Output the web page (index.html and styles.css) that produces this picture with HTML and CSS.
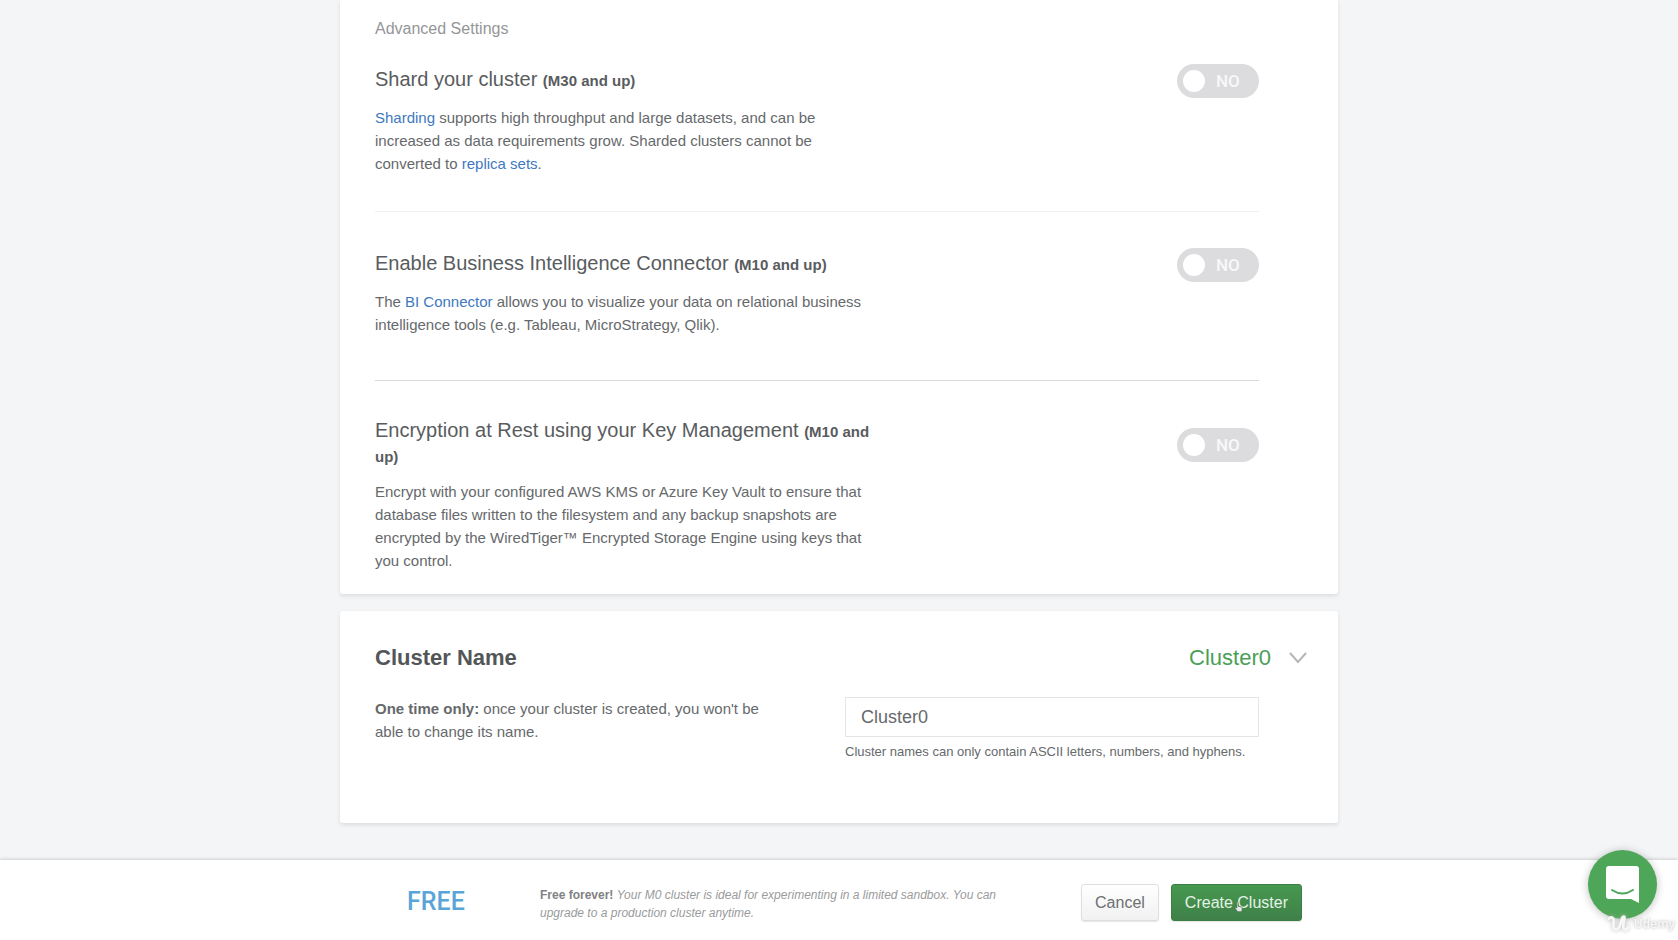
FILE: index.html
```html
<!DOCTYPE html>
<html lang="en">
<head>
<meta charset="utf-8">
<title>Create New Cluster</title>
<link rel="stylesheet" href="styles.css">
</head>
<body>
<main class="content">
  <section class="card settings">
    <h2 class="eyebrow">Advanced Settings</h2>
    <div class="option">
      <div class="option-head">
        <h3 class="option-title" id="shard">Shard your cluster <small>(M30 and up)</small></h3>
        <label class="toggle"><input type="checkbox" role="switch" aria-labelledby="shard"><span>NO</span></label>
      </div>
      <p class="option-text"><a href="#">Sharding</a> supports high throughput and large datasets, and can be increased as data requirements grow. Sharded clusters cannot be converted to <a href="#">replica sets</a>.</p>
    </div>
    <div class="option option-strong">
      <div class="option-head">
        <h3 class="option-title" id="bi">Enable Business Intelligence Connector <small>(M10 and up)</small></h3>
        <label class="toggle"><input type="checkbox" role="switch" aria-labelledby="bi"><span>NO</span></label>
      </div>
      <p class="option-text">The <a href="#">BI Connector</a> allows you to visualize your data on relational business intelligence tools (e.g. Tableau, MicroStrategy, Qlik).</p>
    </div>
    <div class="option">
      <div class="option-head">
        <h3 class="option-title" id="enc">Encryption at Rest using your Key Management <small>(M10 and up)</small></h3>
        <label class="toggle"><input type="checkbox" role="switch" aria-labelledby="enc"><span>NO</span></label>
      </div>
      <p class="option-text">Encrypt with your configured AWS KMS or Azure Key Vault to ensure that database files written to the filesystem and any backup snapshots are encrypted by the WiredTiger™ Encrypted Storage Engine using keys that you control.</p>
    </div>
  </section>

  <section class="card name-card">
    <div class="name-head">
      <h2 class="name-title">Cluster Name</h2>
      <button class="name-value" type="button">Cluster0
        <svg width="18" height="12" viewBox="0 0 18 12" aria-hidden="true"><path d="M1 1l8 9 8-9" fill="none" stroke="#b4b6b7" stroke-width="2"/></svg>
      </button>
    </div>
    <div class="name-body">
      <p class="name-note"><label for="cluster-name"><b>One time only:</b> once your cluster is created, you won't be able to change its name.</label></p>
      <div class="name-field">
        <input id="cluster-name" class="text-input" type="text" value="Cluster0">
        <p class="hint">Cluster names can only contain ASCII letters, numbers, and hyphens.</p>
      </div>
    </div>
  </section>
</main>

<footer class="footer">
  <div class="footer-inner">
    <div class="price">FREE</div>
    <p class="footer-note"><b>Free forever!</b> <i>Your M0 cluster is ideal for experimenting in a limited sandbox. You can upgrade to a production cluster anytime.</i></p>
    <div class="actions">
      <button class="btn" type="button">Cancel</button>
      <button class="btn btn-primary" type="button">Create Cluster
        <svg class="pointer" width="9" height="12" viewBox="0 0 10 14" aria-hidden="true"><path d="M3 1.500c0-1 1.500-1 1.500 0V6l4 1c1 .3 1 1 .9 2l-.6 3.500H4L1 8.500c-.5-1 .6-1.500 2-.3z" fill="#e4e8e4" stroke="#47694a" stroke-width=".8"/></svg>
      </button>
    </div>
  </div>
</footer>

<button class="chat" type="button" aria-label="Open chat">
  <svg width="33" height="37" viewBox="0 0 33 37" aria-hidden="true"><path d="M3 0h27a3 3 0 0 1 3 3v34l-8-4H3a3 3 0 0 1-3-3V3a3 3 0 0 1 3-3z" fill="#fff"/><path d="M6 24q10.500 7 21 0" fill="none" stroke="#4ea658" stroke-width="2" stroke-linecap="round"/></svg>
</button>
<div class="watermark">
  <svg width="23" height="18" viewBox="0 0 25 20" aria-hidden="true"><path d="M2 4q4-3 5 1c1 3-2 10 2 11s6-6 7-11c1-4 4-4 3-1-1 4-2 11 0 12s3-1 4-2" fill="none" stroke="#f6f8f6" stroke-width="3" stroke-linecap="round"/></svg>
  <span>Udemy</span>
</div>
</body>
</html>
```
FILE: styles.css
```css
* { box-sizing: border-box; }

body {
  margin: 0;
  min-height: 100vh;
  display: flex;
  flex-direction: column;
  background: #f4f5f7;
  color: #66696b;
  font: 15px/23px "Liberation Sans", Arial, sans-serif;
}

h2, h3, p { margin: 0; font-weight: 400; }
a { color: #4079bf; text-decoration: none; }
button, input { font: inherit; color: inherit; }

.content {
  flex: 1;
  width: 100%;
  max-width: 998px;
  margin: 0 auto;
  display: flex;
  flex-direction: column;
  gap: 17px;
}

.card {
  background: #fff;
  border-radius: 3px;
  box-shadow: 0 2px 4px rgba(0, 0, 0, .1);
  padding: 0 79px 0 35px;
}

.settings { padding-top: 17px; padding-bottom: 22px; border-radius: 0 0 3px 3px; }
.eyebrow { font-size: 16px; line-height: 24px; color: #949698; }

.option { padding: 36px 0; border-bottom: 1px solid #f0f1f2; }
.option:nth-of-type(1) { padding-top: 23px; }
.option-strong { padding-bottom: 44px; border-bottom-color: #d9dadb; }
.option:last-child { padding-top: 37px; padding-bottom: 0; border-bottom: 0; }
.option-head { display: flex; align-items: center; justify-content: space-between; margin-bottom: 8px; }
.option-title { max-width: 505px; padding-bottom: 4px; font-size: 20px; line-height: 25px; color: #595c5e; }
.option-title small { font-size: 15px; font-weight: 700; line-height: 20px; }
.option-text { max-width: 505px; }

.toggle {
  position: relative;
  flex: none;
  width: 82px;
  height: 34px;
  border-radius: 17px;
  background: #dcdcde;
  color: #f8f8f8;
  font: 500 17px/34px Roboto, sans-serif;
  padding-left: 39px;
}
.toggle input {
  appearance: none;
  position: absolute;
  left: 6px;
  top: 6px;
  width: 22px;
  height: 22px;
  margin: 0;
  border-radius: 50%;
  background: #fff;
}

.name-card { padding-top: 34px; padding-bottom: 61px; }
.name-head { display: flex; justify-content: space-between; align-items: center; margin-right: -48px; }
.name-title { font-size: 22px; line-height: 26px; font-weight: 700; color: #535658; }
.name-value {
  display: flex;
  align-items: center;
  gap: 18px;
  padding: 0;
  border: 0;
  background: none;
  color: #4a9f57;
  font-size: 22px;
  line-height: 26px;
}
.name-body { display: flex; justify-content: space-between; align-items: flex-start; margin-top: 26px; }
.name-note { width: 410px; }
.name-field { width: 414px; }
.text-input {
  display: block;
  width: 100%;
  height: 40px;
  border: 1px solid #e3e4e5;
  border-radius: 0;
  padding: 0 15px;
  font-size: 18px;
  background: #fff;
}
.hint { font-size: 13px; line-height: 20px; margin-top: 5px; }

.footer { background: #fff; box-shadow: 0 -1px 3px rgba(0, 0, 0, .16); }
.footer-inner {
  max-width: 998px;
  margin: 0 auto;
  padding: 24px 36px 18px 67px;
  display: flex;
  align-items: flex-start;
}
.price { width: 133px; font: 500 25px/36px Roboto, sans-serif; color: #5aa5d8; }
.footer-note { flex: 1; max-width: 480px; margin-top: 2px; font: 12px/18px "Liberation Sans", Arial, sans-serif; color: #999b9d; }
.footer-note b { color: #808284; }
.actions { display: flex; gap: 12px; margin-left: auto; }
.btn {
  position: relative;
  height: 37px;
  padding: 0 13px;
  border: 1px solid #dedfe0;
  border-radius: 3px;
  background: linear-gradient(#fff, #f1f1f1);
  box-shadow: 0 1px 1px rgba(0, 0, 0, .1);
  font-size: 16px;
  color: #6d6f71;
}
.btn-primary { background: linear-gradient(#469850, #3f8048); border-color: #397f43; color: #e3f3e4; }
.pointer { position: absolute; left: 62px; top: 16px; }

.chat {
  position: fixed;
  right: 21px;
  bottom: 21px;
  width: 69px;
  height: 69px;
  padding: 0;
  border: 0;
  border-radius: 50%;
  background: #4ea658;
  box-shadow: 0 1px 8px rgba(0, 0, 0, .25);
  display: grid;
  place-items: center;
}
.watermark {
  position: fixed;
  right: 3px;
  bottom: 6px;
  display: flex;
  align-items: center;
  gap: 4px;
  color: #f6f8f6;
  font: 600 12px/20px "Open Sans", sans-serif;
  text-shadow: 0 0 3px #aaa;
}
.watermark svg { filter: drop-shadow(0 0 2px #bbb); }
```
